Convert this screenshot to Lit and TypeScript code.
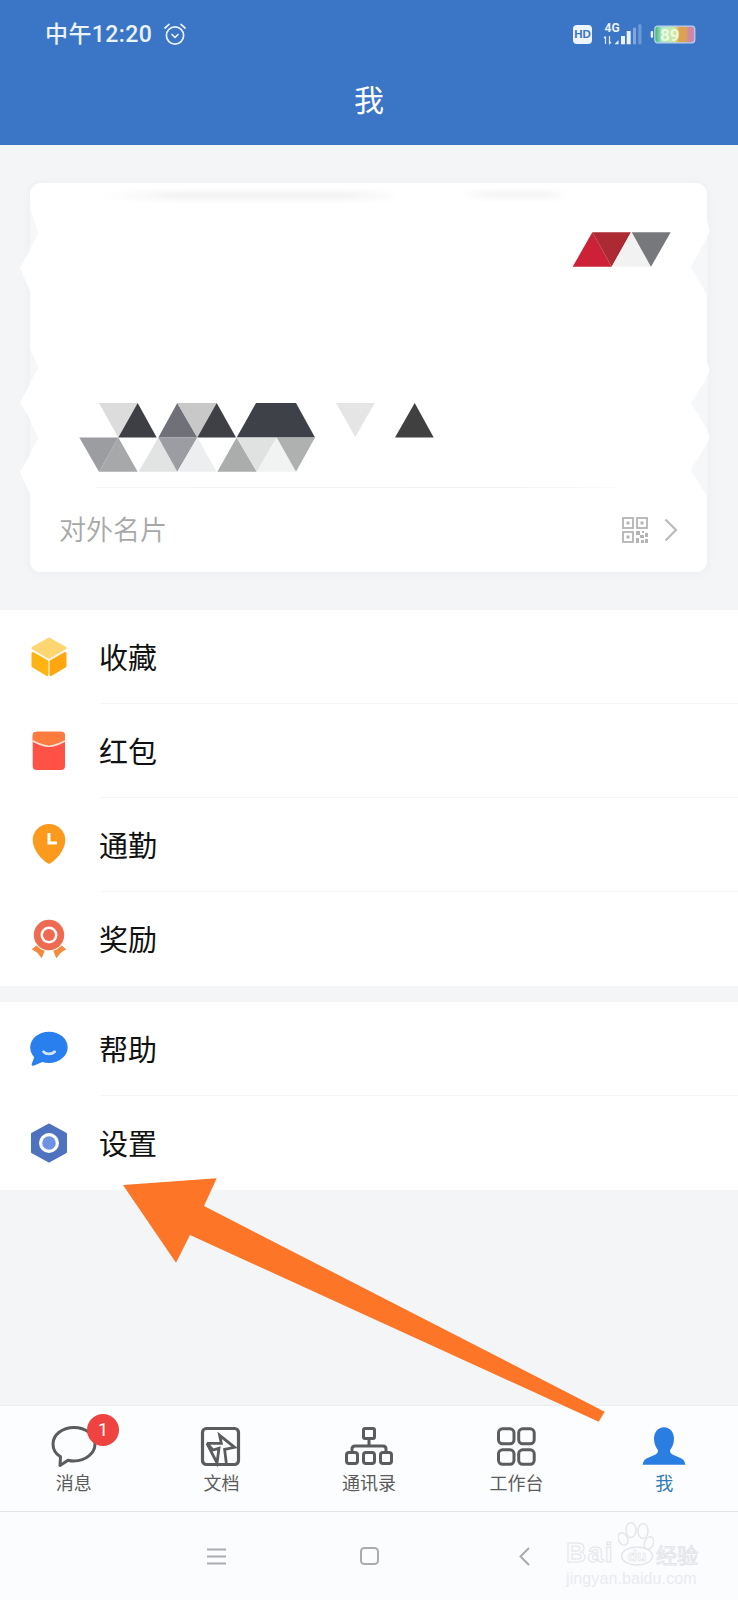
import { LitElement, html, css, svg, unsafeCSS } from "lit";
import { customElement } from "lit/decorators.js";

const CJK = unsafeCSS(`"Noto Sans CJK SC", "Noto Sans", sans-serif`);

const TRIANGLES: [string, string][] = [
  ["572.7,266.7 592.3,232.3 611.7,266.7", "#cd2138"],
  ["592.3,232.3 631,232.3 611.7,266.7", "#ab2a33"],
  ["611.7,266.7 631,232.3 651,266.7", "#f2f2f2"],
  ["631.7,232.3 670.7,232.3 651,266.7", "#77787b"],
  ["99,403 137.7,403 118.3,437.6", "#dcdcdc"],
  ["118.3,437.6 137.7,403 156.7,437.6", "#3e3f44"],
  ["158.3,437.6 177.3,403 197.3,437.6", "#707078"],
  ["177.3,403 216.7,403 197.3,437.6", "#c8c8c8"],
  ["197.3,437.6 216.7,403 236,437.6", "#3f3f46"],
  ["256,403 296,403 315,437.6 236.7,437.6", "#3f4148"],
  ["336,403 374.7,403 355.3,437", "#e5e5e5"],
  ["395,437.6 414.7,403 433.7,437.6", "#404040"],
  ["79.3,437.6 118.3,437.6 99,471.7", "#9c9da0"],
  ["99,471.7 118.3,437.6 137.7,471.7", "#a6a8aa"],
  ["138.7,471.7 158.3,437.6 177.3,471.7", "#e2e4e4"],
  ["158.3,437.6 197.3,437.6 177.3,471.7", "#9c9da3"],
  ["177.3,471.7 197.3,437.6 216.7,471.7", "#eceef0"],
  ["217.3,471.7 236.7,437.6 256.7,471.7", "#abadad"],
  ["236.7,437.6 276.7,437.6 256.7,471.7", "#e0e2e2"],
  ["256.7,471.7 276.7,437.6 296,471.7", "#f1f3f3"],
  ["276.7,437.6 315,437.6 296,471.7", "#afb1b1"],
];
const NOTCHES = [
  "30,208 38.3,233 30,249",
  "30,348 38.3,368 30,383",
  "30,420 38.3,438 30,454",
  "707.5,237 690.8,267 707.5,296",
  "707.5,377 690.8,403 707.5,430",
  "707.5,443 690.8,470 707.5,497",
];
const BULGES = [
  "30.5,249 20,268 30.5,292",
  "30.5,383 20,403 30.5,420",
  "30.5,454 20,472 30.5,495",
  "707,220 709.6,232 707,237",
  "707,362 709.6,370 707,377",
  "707,430 709.6,437 707,443",
];

const cardArt = html`<svg class="art" viewBox="30 183 677 304" width="677" height="304">
  <defs>
    <filter id="soft" x="-20%" y="-300%" width="140%" height="700%"><feGaussianBlur stdDeviation="3"></feGaussianBlur></filter>
    <linearGradient id="sm" x1="0" x2="1" y1="0" y2="0">
      <stop offset="0" stop-color="#f4f4f4" stop-opacity="0"></stop>
      <stop offset="0.25" stop-color="#f0f0f0"></stop>
      <stop offset="0.85" stop-color="#f0f0f0"></stop>
      <stop offset="1" stop-color="#f4f4f4" stop-opacity="0.3"></stop>
    </linearGradient>
  </defs>
  <rect x="100" y="192" width="293" height="7" fill="url(#sm)" filter="url(#soft)"></rect>
  <rect x="459" y="192" width="106" height="5" fill="url(#sm)" filter="url(#soft)"></rect>
  ${NOTCHES.map((p) => svg`<polygon points=${p} fill="#f6f7f9"></polygon>`)}
  ${BULGES.map((p) => svg`<polygon points=${p} fill="#ffffff"></polygon>`)}
  ${TRIANGLES.map(([p, f]) => svg`<polygon points=${p} fill=${f}></polygon>`)}
</svg>`;

const icons = {
  box: html`<svg class="mi" viewBox="0 0 38 40" width="38" height="40">
    <polygon points="19,2 35,11 19,20.5 3,11" fill="#fdd672" stroke="#fdd672" stroke-width="3" stroke-linejoin="round"></polygon>
    <polygon points="3,16.5 17,24.5 17,37.5 3,29" fill="#ffb413" stroke="#ffb413" stroke-width="3" stroke-linejoin="round"></polygon>
    <polygon points="35,16.5 21,24.5 21,37.5 35,29" fill="#ffa50f" stroke="#ffa50f" stroke-width="3" stroke-linejoin="round"></polygon>
  </svg>`,
  envelope: html`<svg class="mi" viewBox="0 0 38 40" width="38" height="40">
    <rect x="2.7" y="0.7" width="32.3" height="38.3" rx="4" fill="#ff5247"></rect>
    <path d="M2.7 5Q2.7.7 7 .7H31Q35 .7 35 5V9.5C29 12.5 24 14.5 19 14.5C14 14.5 9 12.5 2.7 9.5Z" fill="#ff7b3e"></path>
    <path d="M2.7 10C9 13.2 14 15.2 19 15.2C24 15.2 29 13.2 35 10" fill="none" stroke="#ffe3d6" stroke-width="1.6"></path>
  </svg>`,
  pin: html`<svg class="mi" viewBox="0 0 38 40" width="38" height="40">
    <path d="M19-1C28-1 35.3 6 35.3 15C35.3 24 27 35 19 39C11 35 2.7 24 2.7 15C2.7 6 10-1 19-1Z" fill="#fb9a1c"></path>
    <path d="M19 8V18H27" fill="none" stroke="#fff" stroke-width="3"></path>
  </svg>`,
  medal: html`<svg class="mi" viewBox="0 0 38 40" width="38" height="40">
    <polygon points="1.7,30.3 9.3,24.3 15,31 11.7,39.3 7.3,33.7" fill="#f58a3c"></polygon>
    <polygon points="36.3,30.3 28.7,24.3 23,31 26.3,39.3 30.7,33.7" fill="#f58a3c"></polygon>
    <circle cx="19" cy="16" r="16.2" fill="#fff"></circle>
    <circle cx="19" cy="16" r="15.2" fill="#ee6a50"></circle>
    <circle cx="19" cy="16" r="8.5" fill="#fff"></circle>
    <circle cx="19" cy="16" r="6" fill="#ee6a50"></circle>
  </svg>`,
  help: html`<svg class="mi" viewBox="0 0 38 40" width="38" height="40">
    <path d="M19 2.7C29.4 2.7 37.7 9.6 37.7 18.3C37.7 27 29.4 34 19 34C16.6 34 14.4 33.6 12.4 33L3.6 36.7C2.2 37.2 1.2 36 1.8 34.8L4.2 28.2C1.6 25.4 .2 22 .2 18.3C.2 9.6 8.6 2.7 19 2.7Z" fill="#2a7fef"></path>
    <path d="M13.6 22.8C16 25.6 22 25.6 24.6 22.8" fill="none" stroke="#d4e6ff" stroke-width="2.8" stroke-linecap="round"></path>
  </svg>`,
  gear: html`<svg class="mi" viewBox="0 0 38 40" width="38" height="40">
    <polygon points="19,2 35.5,11 35.5,29 19,38 2.5,29 2.5,11" fill="#4e72be" stroke="#4e72be" stroke-width="3" stroke-linejoin="round"></polygon>
    <circle cx="19" cy="20" r="10" fill="#fff"></circle>
    <circle cx="19" cy="20" r="6.8" fill="#6f93e2"></circle>
  </svg>`,
};

const tabIcons = {
  chat: html`<svg viewBox="0 0 48 44" width="48" height="44"><path d="M24 2.4C35.8 2.4 45 9.8 45 19S35.8 36 24 36C21.8 36 19.8 35.7 18 35.2L10 40.5L10.5 31.8C5.5 28.8 3 24.2 3 19C3 9.8 12.2 2.4 24 2.4Z" fill="none" stroke="#5a5c5e" stroke-width="3" stroke-linejoin="round"></path></svg>`,
  doc: html`<svg viewBox="0 0 44 44" width="44" height="44">
    <rect x="3.5" y="3.5" width="36" height="36" rx="4" fill="none" stroke="#5a5c5e" stroke-width="3.2"></rect>
    <path d="M7.9 18.3H22.3L20.6 10.3L35.6 22.3L25.6 24.3L27.3 38M18 38L20 23.3L14 25L7.9 18.3Z" fill="none" stroke="#5a5c5e" stroke-width="2.8" stroke-linejoin="miter"></path>
  </svg>`,
  org: html`<svg viewBox="0 0 52 44" width="52" height="44" fill="none" stroke="#5a5c5e" stroke-width="3">
    <rect x="20.5" y="3.5" width="11" height="10" rx="1.5"></rect>
    <rect x="3.5" y="27.5" width="11" height="11" rx="2.5"></rect>
    <rect x="20.5" y="27.5" width="11" height="11" rx="2.5"></rect>
    <rect x="37.5" y="27.5" width="11" height="11" rx="2.5"></rect>
    <path d="M26 13.5V21M9 27.5V24Q9 21 12 21H40Q43 21 43 24V27.5"></path>
  </svg>`,
  grid: html`<svg viewBox="0 0 44 44" width="44" height="44" fill="none" stroke="#5a5c5e" stroke-width="3">
    <rect x="3.5" y="3.8" width="15.5" height="15" rx="4"></rect>
    <rect x="23.7" y="3.8" width="15.5" height="15" rx="4"></rect>
    <rect x="3.5" y="24.8" width="15.5" height="14.5" rx="4"></rect>
    <rect x="23.7" y="24.8" width="15.5" height="14.5" rx="4"></rect>
  </svg>`,
  me: html`<svg viewBox="0 0 44 44" width="44" height="44"><path d="M22 2.2C28 2.2 32 7.2 32 13.7C32 18.7 30 22.7 28 25.2C28 27.2 29 28.7 31 29.7L39 33.2C41.5 34.3 43 36.7 43.3 39.7H.7C1 36.7 2.5 34.3 5 33.2L13 29.7C15 28.7 16 27.2 16 25.2C14 22.7 12 18.7 12 13.7C12 7.2 16 2.2 22 2.2Z" fill="#2a7de1"></path></svg>`,
};

const TABS = [
  { icon: tabIcons.chat, label: "消息", badge: "1" },
  { icon: tabIcons.doc, label: "文档" },
  { icon: tabIcons.org, label: "通讯录" },
  { icon: tabIcons.grid, label: "工作台" },
  { icon: tabIcons.me, label: "我", active: true },
];

const GROUPS = [
  [
    { icon: icons.box, label: "收藏" },
    { icon: icons.envelope, label: "红包" },
    { icon: icons.pin, label: "通勤" },
    { icon: icons.medal, label: "奖励" },
  ],
  [
    { icon: icons.help, label: "帮助" },
    { icon: icons.gear, label: "设置" },
  ],
];

@customElement("app-root")
export class AppRoot extends LitElement {
  static styles = css`
    :host {
      display: block;
      font-family: ${CJK};
    }
    .page {
      position: relative;
      width: 738px;
      height: 1600px;
      display: flex;
      flex-direction: column;
      background: #f4f5f7;
      overflow: hidden;
    }
    .header {
      height: 145px;
      flex: none;
      background: #3b75c5;
      color: #fff;
    }
    .status {
      height: 68px;
      display: flex;
      align-items: center;
      justify-content: space-between;
      padding: 0 42px 0 45px;
    }
    .status-left {
      display: flex;
      align-items: center;
      gap: 11px;
    }
    .time {
      font-size: 23px;
      font-weight: 500;
      font-family: Roboto, "Noto Sans CJK SC", sans-serif;
      color: #eaf2fb;
      line-height: 30px;
      letter-spacing: 0.4px;
      margin-top: 2px;
    }
    .status-right {
      display: flex;
      align-items: center;
    }
    .hd {
      width: 19px;
      height: 19px;
      background: #eef4fc;
      border-radius: 4px;
      color: #3b75c5;
      font: 700 11.5px/19px "Liberation Sans", sans-serif;
      text-align: center;
      margin-right: 11px;
    }
    .status-right svg {
      display: block;
    }
    .status-right .bat {
      margin-left: 6px;
    }
    .title {
      text-align: center;
      font-size: 30px;
      line-height: 61px;
      font-weight: 400;
    }
    .card {
      position: relative;
      margin: 38px 31px 38px 30px;
      background: #fff;
      border-radius: 11px;
      box-shadow: 0 1px 10px rgba(40, 50, 70, 0.05);
      flex: none;
    }
    .art {
      display: block;
      overflow: visible;
    }
    .sep {
      height: 1px;
      margin: 0 91px 0 66px;
      background: linear-gradient(90deg, #f4f4f4, #f2f2f2 80%, #fbfbfb);
    }
    .card-foot {
      height: 84px;
      display: flex;
      align-items: center;
      padding: 0 29px;
    }
    .card-foot .name {
      flex: 1;
      font-size: 27px;
      color: #a8a8a8;
      line-height: 36px;
      font-weight: 350;
      margin-top: -2px;
    }
    .qr {
      display: block;
      margin-right: 16px;
    }
    .group {
      background: #fff;
      flex: none;
    }
    .group + .group {
      margin-top: 16px;
    }
    .row {
      display: flex;
      align-items: center;
      padding-left: 30px;
    }
    .mi {
      display: block;
      flex: none;
      overflow: visible;
    }
    .row-body {
      flex: 1;
      height: 93px;
      margin-left: 33px;
      border-bottom: 1px solid #f4f4f4;
      display: flex;
      align-items: center;
      font-size: 29px;
      color: #111;
      line-height: 40px;
    }
    .row-text {
      margin: -2px 0 0 -2px;
    }
    .row:last-child .row-body {
      height: 94px;
      border-bottom: none;
    }
    .spacer {
      flex: 1;
    }
    .tabbar {
      flex: none;
      display: grid;
      grid-template-columns: repeat(5, 1fr);
      background: #fcfdfe;
      border-top: 1px solid #ececee;
      border-bottom: 1px solid #e4e5e7;
      box-sizing: border-box;
      height: 107px;
    }
    .tab {
      position: relative;
      display: flex;
      flex-direction: column;
      align-items: center;
      padding-top: 19px;
      color: #5b5b5b;
      font-size: 18px;
      line-height: 24px;
    }
    .tab svg {
      display: block;
    }
    .tab.active {
      color: #2f7ab8;
    }
    .tab .lbl {
      margin-top: 1px;
    }
    .badge {
      position: absolute;
      left: 87px;
      top: 8px;
      width: 32px;
      height: 32px;
      border-radius: 50%;
      background: #ee4340;
      color: #fff;
      font: 400 18px/32px Roboto, sans-serif;
      text-align: center;
    }
    .nav {
      position: relative;
      flex: none;
      height: 88px;
      background: #fbfcfe;
      display: flex;
      align-items: center;
      padding-left: 207px;
    }
    .nav svg {
      display: block;
    }
    .nav .home {
      margin: 0 140px 0 134px;
    }
    .mark {
      position: absolute;
      left: 566px;
      top: 6px;
      width: 136px;
      color: transparent;
    }
    .mark-top {
      display: flex;
      align-items: flex-end;
      height: 48px;
    }
    .bai {
      font: 700 28px/26px "Liberation Sans", sans-serif;
      -webkit-text-stroke: 1px #e3e5e8;
      letter-spacing: 1.5px;
      width: 52px;
    }
    .paw {
      position: relative;
      width: 36px;
      height: 48px;
      flex: none;
    }
    .du {
      position: absolute;
      left: 4px;
      bottom: 2px;
      width: 30px;
      text-align: center;
      font: 700 15px/16px "Liberation Sans", sans-serif;
      -webkit-text-stroke: 0.7px #e3e5e8;
    }
    .jy {
      font-size: 21px;
      line-height: 24px;
      margin-left: 2px;
      -webkit-text-stroke: 1px #e3e5e8;
      white-space: nowrap;
    }
    .mark-url {
      font: 400 16px/18px "Liberation Sans", sans-serif;
      color: #e9ebee;
      margin-top: 4px;
      white-space: nowrap;
      letter-spacing: 0.1px;
    }
    .arrow {
      position: absolute;
      left: 0;
      top: 0;
      pointer-events: none;
    }
  `;

  render() {
    return html`<div class="page">
      <div class="header">
        <div class="status">
          <div class="status-left">
            <span class="time">中午12:20</span>
            <svg viewBox="0 0 24 24" width="24" height="24" fill="none" stroke="#eaf2fb" stroke-width="1.7" stroke-linecap="round" stroke-linejoin="round">
              <circle cx="12" cy="13.5" r="8.6"></circle>
              <path d="M9 12.5L12 15.5L15 12.5M2 6L6 2.4M22 6L18 2.4"></path>
            </svg>
          </div>
          <div class="status-right">
            <div class="hd">HD</div>
            <svg viewBox="603 20 40 26" width="40" height="26">
              <text x="604.5" y="30.5" font-family="Roboto, sans-serif" font-size="12" font-weight="700" fill="#eaf2fb">4G</text>
              <path d="M605.5 35.5V43M604 37L605.5 35.5M609.5 35V42.5L611 41" fill="none" stroke="#dfe9f7" stroke-width="1.2"></path>
              <polygon points="614.5,43.3 618.5,39 618.5,43.3" fill="#eaf2fb"></polygon>
              <rect x="621" y="35" width="4" height="8.3" fill="#eaf2fb"></rect>
              <rect x="626.7" y="30" width="4" height="13.3" fill="#eaf2fb"></rect>
              <rect x="633" y="26.7" width="3" height="16.6" fill="#7fa6dd"></rect>
              <rect x="638.3" y="23.3" width="3.2" height="20" fill="#6d99d7"></rect>
            </svg>
            <svg class="bat" viewBox="650 22 47 23" width="47" height="23">
              <defs>
                <linearGradient id="bat" x1="0" x2="1" y1="0" y2="0">
                  <stop offset="0" stop-color="#3fae6a"></stop>
                  <stop offset="0.18" stop-color="#a8ecd0"></stop>
                  <stop offset="0.5" stop-color="#cfe6a0"></stop>
                  <stop offset="0.62" stop-color="#dba253"></stop>
                  <stop offset="0.78" stop-color="#dba253"></stop>
                  <stop offset="0.85" stop-color="#cf86a8"></stop>
                  <stop offset="1" stop-color="#cf86a8"></stop>
                </linearGradient>
              </defs>
              <rect x="651.7" y="30" width="2.4" height="6.7" rx="1" fill="#eaf2fb"></rect>
              <rect x="655.8" y="25.2" width="40" height="16.6" rx="3" fill="url(#bat)" stroke="#bcd3ee" stroke-width="1.2"></rect>
              <text x="661" y="39.5" font-family="Roboto, sans-serif" font-size="17" font-weight="700" fill="#eef9d8">89</text>
            </svg>
          </div>
        </div>
        <div class="title">我</div>
      </div>

      <div class="card">
        ${cardArt}
        <div class="sep"></div>
        <div class="card-foot">
          <span class="name">对外名片</span>
          <svg class="qr" viewBox="0 0 26 26" width="26" height="26" fill="none" stroke="#b4b4b4" stroke-width="1.8">
            <rect x="1" y="1" width="10" height="10"></rect>
            <rect x="15" y="1" width="10" height="10"></rect>
            <rect x="1" y="15" width="10" height="10"></rect>
            <rect x="4.5" y="4.5" width="3" height="3" fill="#b4b4b4" stroke="none"></rect>
            <rect x="18.5" y="4.5" width="3" height="3" fill="#b4b4b4" stroke="none"></rect>
            <rect x="4.5" y="18.5" width="3" height="3" fill="#b4b4b4" stroke="none"></rect>
            <path d="M14 14h4v4h-4zM20 14h2v2h-2zM23 16h3v4h-3zM18 18h4v3h-4zM14 21h3v5h-3zM19 23h3v3h-3zM23 22h3v4h-3z" fill="#b4b4b4" stroke="none"></path>
          </svg>
          <svg viewBox="0 0 14 24" width="14" height="24" fill="none" stroke="#bbbbbb" stroke-width="2.2"><path d="M1.5 1.5L12 12L1.5 22.5"></path></svg>
        </div>
      </div>

      ${GROUPS.map(
        (g) => html`<div class="group">
          ${g.map(
            (r) => html`<div class="row">
              ${r.icon}
              <div class="row-body"><span class="row-text">${r.label}</span></div>
            </div>`
          )}
        </div>`
      )}

      <div class="spacer"></div>

      <div class="tabbar">
        ${TABS.map(
          (t) => html`<div class="tab ${t.active ? "active" : ""}">
            ${t.icon}
            <span class="lbl">${t.label}</span>
            ${t.badge ? html`<span class="badge">${t.badge}</span>` : ""}
          </div>`
        )}
      </div>

      <div class="nav">
        <svg viewBox="0 0 19 17" width="19" height="17" stroke="#a9abaf" stroke-width="1.8"><path d="M0 1.5H19M0 8.5H19M0 15.5H19"></path></svg>
        <svg class="home" viewBox="0 0 19 18" width="19" height="18" fill="none" stroke="#a9abaf" stroke-width="2"><rect x="1" y="1" width="17" height="16" rx="3.5"></rect></svg>
        <svg viewBox="0 0 11 19" width="11" height="19" fill="none" stroke="#a9abaf" stroke-width="2"><path d="M10 1L1.5 9.5L10 18"></path></svg>
        <div class="mark">
          <div class="mark-top">
            <span class="bai">Bai</span>
            <span class="paw">
              <svg viewBox="0 0 36 48" width="36" height="48" fill="none" stroke="#e3e5e8" stroke-width="1.4">
                <ellipse cx="5" cy="21" rx="4.5" ry="6.5" transform="rotate(-25 5 21)"></ellipse>
                <ellipse cx="13" cy="12" rx="5" ry="7.5"></ellipse>
                <ellipse cx="25" cy="13" rx="5" ry="7.5"></ellipse>
                <ellipse cx="31" cy="25" rx="4.5" ry="6.5" transform="rotate(25 31 25)"></ellipse>
                <ellipse cx="19" cy="38" rx="15.5" ry="9"></ellipse>
              </svg>
              <span class="du">du</span>
            </span>
            <span class="jy">经验</span>
          </div>
          <div class="mark-url">jingyan.baidu.com</div>
        </div>
      </div>

      <svg class="arrow" viewBox="0 0 738 1600" width="738" height="1600">
        <polygon points="123,1185 216.7,1178.3 204,1206 604.7,1411.7 598.7,1421.7 190,1235 176,1262.7" fill="#fd7527"></polygon>
      </svg>
    </div>`;
  }
}
